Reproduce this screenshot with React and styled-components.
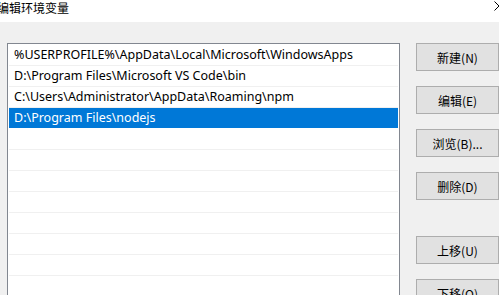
import React from 'react';
import styled, { createGlobalStyle } from 'styled-components';

const paths = [
    '%USERPROFILE%\\AppData\\Local\\Microsoft\\WindowsApps',
    'D:\\Program Files\\Microsoft VS Code\\bin',
    'C:\\Users\\Administrator\\AppData\\Roaming\\npm',
    'D:\\Program Files\\nodejs',
];

const buttons = [
    { label: '新建(N)' },
    { label: '编辑(E)' },
    { label: '浏览(B)...' },
    { label: '删除(D)' },
    { label: '上移(U)', apart: true },
    { label: '下移(O)' },
];

const selectedIndex = 3;
const rowCount = 12;

const App = () => {
    const rows = Array.from({ length: rowCount }, (_, i) => paths[i] || '');

    return (
        <>
            <GlobalStyle />
            <Window>
                <TitleBar>
                    <Title>编辑环境变量</Title>
                    <CloseIcon viewBox="0 0 10 10">
                        <path d="M0.5 0.5 L9.5 9.5 M9.5 0.5 L0.5 9.5" stroke="#000" strokeWidth="1" fill="none" />
                    </CloseIcon>
                </TitleBar>
                <Body>
                    <ListBox>
                        {rows.map((text, i) => (
                            <Row key={i} selected={i === selectedIndex}>{text}</Row>
                        ))}
                    </ListBox>
                    <ButtonColumn>
                        {buttons.map(b => (
                            <Button key={b.label} apart={b.apart}>{b.label}</Button>
                        ))}
                    </ButtonColumn>
                </Body>
            </Window>
        </>
    );
};

export default App;

const GlobalStyle = createGlobalStyle`
html, body {
    margin: 0;
    padding: 0;
    overflow: hidden;
    background: #f0f0f0;
}
`;

const Window = styled.div`
width: 499px;
height: 295px;
overflow: hidden;
display: flex;
flex-direction: column;
font-family: "Noto Sans", "Noto Sans CJK SC", sans-serif;
font-size: 12px;
color: #000;
`;

const TitleBar = styled.div`
height: 22px;
flex-shrink: 0;
background: #fff;
display: flex;
align-items: flex-start;
justify-content: space-between;
`;

const Title = styled.div`
margin-left: -3px;
margin-top: -1px;
font-family: "Noto Sans CJK SC", sans-serif;
font-size: 12px;
line-height: 17px;
`;

const CloseIcon = styled.svg`
width: 10px;
height: 10px;
margin-top: 1px;
margin-right: -5px;
`;

const Body = styled.div`
flex: 1;
display: flex;
align-items: flex-start;
padding: 21px 0 0 7px;
gap: 16px;
`;

const ListBox = styled.div`
width: 389px;
height: 260px;
flex-shrink: 0;
background: #fff;
border: 1px solid #828790;
padding: 1px 1px 0;
box-sizing: content-box;
overflow: hidden;
`;

const Row = styled.div`
height: 20px;
line-height: 20px;
padding-left: 5px;
font-size: 12.5px;
border-bottom: 1px solid ${p => (p.selected ? '#fff' : '#f0f0f0')};
background: ${p => (p.selected ? '#0078d7' : 'transparent')};
color: ${p => (p.selected ? '#fff' : '#000')};
white-space: nowrap;
`;

const ButtonColumn = styled.div`
width: 85px;
display: flex;
flex-direction: column;
gap: 15px;
`;

const Button = styled.div`
height: 26px;
margin-top: ${p => (p.apart ? '21px' : '0')};
background: #e1e1e1;
border: 1px solid #adadad;
display: flex;
align-items: center;
justify-content: center;
font-family: "Noto Sans CJK SC", sans-serif;
font-size: 12px;
`;
